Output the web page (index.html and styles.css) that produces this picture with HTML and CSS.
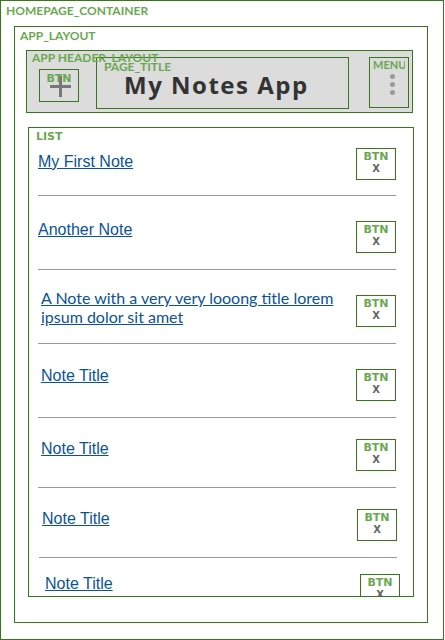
FILE: index.html
```html
<!DOCTYPE html>
<html lang="en">
<head>
<meta charset="utf-8">
<title>My Notes App</title>
<link rel="stylesheet" href="styles.css">
</head>
<body>
<div class="homepage">
  <span class="tag tag-home">HOMEPAGE_CONTAINER</span>
  <div class="app-layout">
    <span class="tag tag-app">APP_LAYOUT</span>
    <header class="app-header">
      <span class="tag tag-header">APP HEADER_LAYOUT</span>
      <button class="add-btn" type="button">
        <span class="btn-tag">BTN</span>
        <svg class="plus" width="21" height="21" viewBox="0 0 21 21" aria-hidden="true">
          <path d="M10.5 0V21M0 10.5H21" stroke="#777" stroke-width="3" fill="none"/>
        </svg>
      </button>
      <div class="page-title">
        <span class="tag tag-title">PAGE_TITLE</span>
        <h1 class="title-text">My Notes App</h1>
      </div>
      <button class="menu-btn" type="button">
        <span class="menu-tag">MENU</span>
        <span class="dot"></span>
        <span class="dot"></span>
        <span class="dot"></span>
      </button>
    </header>
    <section class="list">
      <span class="list-tag">LIST</span>
      <ul class="notes">
        <li class="note">
          <div class="note-row">
            <a class="note-link" href="#">My First Note</a>
            <button class="del-btn" type="button"><span class="del-tag">BTN</span><span class="del-x">X</span></button>
          </div>
        </li>
        <li class="note">
          <div class="note-row">
            <a class="note-link" href="#">Another Note</a>
            <button class="del-btn" type="button"><span class="del-tag">BTN</span><span class="del-x">X</span></button>
          </div>
        </li>
        <li class="note">
          <div class="note-row">
            <a class="note-link" href="#">A Note with a very very looong title lorem ipsum dolor sit amet</a>
            <button class="del-btn" type="button"><span class="del-tag">BTN</span><span class="del-x">X</span></button>
          </div>
        </li>
        <li class="note">
          <div class="note-row">
            <a class="note-link" href="#">Note Title</a>
            <button class="del-btn" type="button"><span class="del-tag">BTN</span><span class="del-x">X</span></button>
          </div>
        </li>
        <li class="note">
          <div class="note-row">
            <a class="note-link" href="#">Note Title</a>
            <button class="del-btn" type="button"><span class="del-tag">BTN</span><span class="del-x">X</span></button>
          </div>
        </li>
        <li class="note">
          <div class="note-row">
            <a class="note-link" href="#">Note Title</a>
            <button class="del-btn" type="button"><span class="del-tag">BTN</span><span class="del-x">X</span></button>
          </div>
        </li>
        <li class="note">
          <div class="note-row">
            <a class="note-link" href="#">Note Title</a>
            <button class="del-btn" type="button"><span class="del-tag">BTN</span><span class="del-x">X</span></button>
          </div>
        </li>
      </ul>
    </section>
  </div>
</div>
</body>
</html>
```

FILE: styles.css
```css
* { box-sizing: border-box; }

html, body {
  margin: 0;
  padding: 0;
  background: #ffffff;
}

body {
  font-family: "Liberation Sans", Arial, sans-serif;
}

.homepage {
  position: relative;
  width: 444px;
  height: 640px;
  border: 1px solid #38761d;
  padding: 25px 0 0 13px;
}

.tag {
  position: absolute;
  font-family: Lato, "Open Sans", sans-serif;
  font-weight: 700;
  font-size: 12px;
  line-height: 14px;
  color: #6aa84f;
  white-space: nowrap;
  pointer-events: none;
}

.tag-home { top: 3px; left: 5px; }
.tag-app { top: 2px; left: 5px; }
.tag-header { top: 0; left: 5px; z-index: 2; }
.tag-title { top: 2px; left: 7px; }

.app-layout {
  position: relative;
  width: 414px;
  height: 597px;
  border: 1px solid #38761d;
  padding: 23px 0 0 11px;
}

/* Header */
.app-header {
  position: relative;
  display: flex;
  align-items: flex-start;
  width: 387px;
  height: 63px;
  border: 1px solid #38761d;
  background: #dcdcdc;
  padding: 6px 0 0 12px;
}

.add-btn {
  position: relative;
  display: flex;
  align-items: center;
  justify-content: center;
  width: 40px;
  height: 33px;
  margin-top: 12px;
  padding: 1px 0 0 2px;
  border: 1px solid #38761d;
  background: transparent;
}

.btn-tag {
  position: absolute;
  top: 2px;
  left: 0;
  right: 0;
  text-align: center;
  font-family: "DejaVu Sans", Verdana, sans-serif;
  font-weight: 700;
  font-size: 11px;
  line-height: 13px;
  color: #6aa84f;
}

.plus { display: block; }

.page-title {
  position: relative;
  width: 253px;
  height: 52px;
  margin-left: 17px;
  border: 1px solid #38761d;
  padding: 12px 0 0 27px;
}

.title-text {
  margin: 0;
  font-family: "Open Sans", Lato, sans-serif;
  font-weight: 700;
  font-size: 24px;
  line-height: 30px;
  letter-spacing: 1.5px;
  color: #333333;
  white-space: nowrap;
}

.menu-btn {
  position: relative;
  display: flex;
  flex-direction: column;
  align-items: center;
  gap: 3px;
  width: 40px;
  height: 51px;
  margin-left: 20px;
  padding: 16px 0 0 6px;
  border: 1px solid #38761d;
  background: transparent;
  overflow: hidden;
}

.menu-tag {
  position: absolute;
  top: 0;
  left: 3px;
  width: 32px;
  overflow: hidden;
  white-space: nowrap;
  font-family: Lato, "Open Sans", sans-serif;
  font-weight: 700;
  font-size: 11px;
  line-height: 13px;
  color: #6aa84f;
}

.dot {
  width: 5px;
  height: 5px;
  border-radius: 50%;
  background: #9a9a9a;
}

/* List */
.list {
  position: relative;
  width: 386px;
  height: 470px;
  margin: 14px 0 0 2px;
  border: 1px solid #38761d;
  overflow: hidden;
}

.list-tag {
  position: absolute;
  top: 2px;
  left: 7px;
  font-family: "DejaVu Sans", Verdana, sans-serif;
  font-weight: 700;
  font-size: 11px;
  line-height: 13px;
  color: #6aa84f;
}

.notes {
  list-style: none;
  margin: 0;
  padding: 0;
}

.note {
  margin: 0 17px 0 9px;
  padding: 25px 0 16px;
  border-bottom: 1px solid #999999;
}

.note-row {
  display: flex;
  align-items: flex-start;
  gap: 12px;
}

.note-link {
  flex: 1;
  font-family: "Liberation Sans", Arial, sans-serif;
  font-size: 16px;
  line-height: 19px;
  color: #0b5394;
  text-decoration: underline;
}

.del-btn {
  flex: none;
  display: flex;
  flex-direction: column;
  align-items: center;
  width: 40px;
  height: 32px;
  padding: 1.4px 0 0;
  border: 1px solid #38761d;
  background: transparent;
}

.del-tag {
  font-family: "DejaVu Sans", Verdana, sans-serif;
  font-weight: 700;
  font-size: 11px;
  line-height: 13px;
  color: #6aa84f;
}

.del-x {
  font-family: "DejaVu Sans", Verdana, sans-serif;
  font-weight: 700;
  font-size: 10px;
  line-height: 11px;
  color: #666666;
}

/* per-item spacing as in the mockup */
.note:nth-child(1) { padding-top: 20px; padding-bottom: 15px; }
.note:nth-child(1) .note-link { margin-top: 3.5px; }

.note:nth-child(2) .note-link { margin-top: -1.2px; }

.note:nth-child(3) .note-link {
  margin-top: -7.2px;
  padding-left: 3px;
  font-family: Lato, "Open Sans", sans-serif;
}

.note:nth-child(4) .note-link { margin-top: -3.5px; padding-left: 3px; }

.note:nth-child(5) { padding-top: 21px; }
.note:nth-child(5) .note-link { margin-top: -0.5px; padding-left: 3px; }

.note:nth-child(6) { padding-top: 21px; margin-left: 10px; margin-right: 16px; }
.note:nth-child(6) .note-link { margin-top: -0.5px; padding-left: 3px; }

.note:nth-child(7) { padding-top: 16px; margin-left: 13px; margin-right: 13px; }
.note:nth-child(7) .note-link { margin-top: -0.5px; padding-left: 3px; }
```
